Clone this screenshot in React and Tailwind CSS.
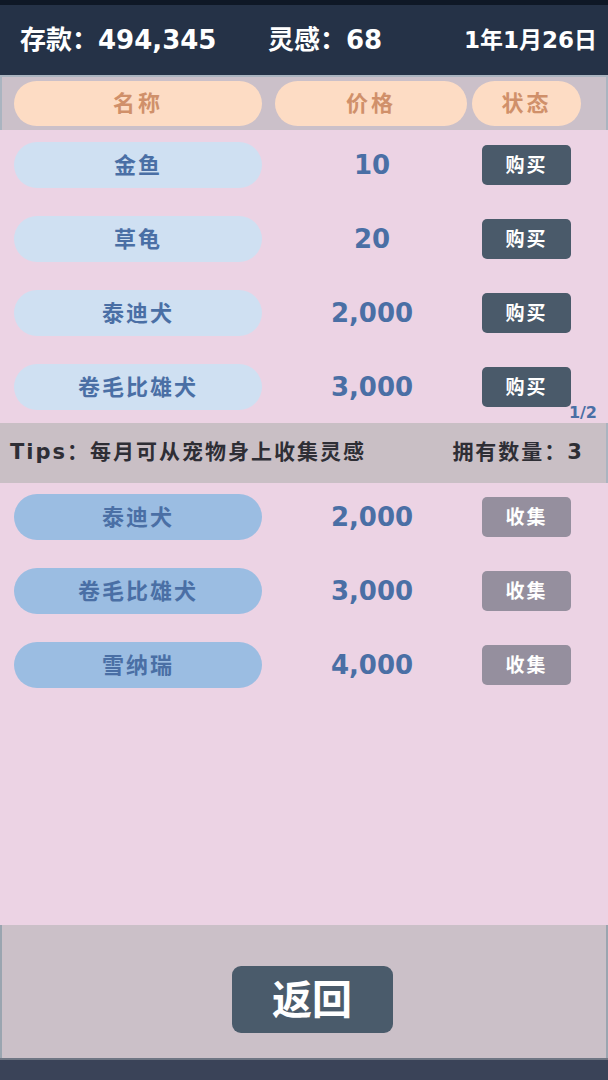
import React from 'react';

const FONT = { fontFamily: '"DejaVu Sans", "Noto Sans CJK SC", sans-serif' };

const shopItems = [
  { name: '金鱼', price: '10' },
  { name: '草龟', price: '20' },
  { name: '泰迪犬', price: '2,000' },
  { name: '卷毛比雄犬', price: '3,000' },
];

const ownedPets = [
  { name: '泰迪犬', price: '2,000' },
  { name: '卷毛比雄犬', price: '3,000' },
  { name: '雪纳瑞', price: '4,000' },
];

// one line of the list: name pill, price, action button
const PetRow = ({ item, pillClass, btnClass, label }) => (
  <div className="flex items-center h-[74px]">
    <div className={`ml-[14px] w-[248px] h-[46px] rounded-full flex items-center justify-center text-[22px] tracking-[2px] font-bold text-[#4a6fa5] ${pillClass}`}>
      {item.name}
    </div>
    <div className="w-[220px] text-center text-[26px] font-bold text-[#4a6fa5]">{item.price}</div>
    <div className={`w-[89px] h-[40px] rounded-[5px] flex items-center justify-center text-[19px] tracking-[2px] font-bold text-white ${btnClass}`}>
      {label}
    </div>
  </div>
);

export default function App() {
  return (
    <div className="w-[608px] h-[1080px] flex flex-col bg-[#ecd3e4] overflow-hidden" style={FONT}>
      <div className="h-[5px] bg-[#0f1826]" />
      {/* top status bar */}
      <div className="h-[70px] bg-[#253247] flex items-center text-white text-[26px] font-bold whitespace-nowrap">
        <div className="ml-[20px] w-[248px]">存款：494,345</div>
        <div className="w-[180px]">灵感：68</div>
        <div className="flex-1 text-right pr-[11px] text-[23px]">1年1月26日</div>
      </div>

      {/* table header */}
      <div className="h-[55px] bg-[#cbc0c9] border-t-2 border-[#aab4c0] border-x-2 flex items-center text-[22px] tracking-[3px] font-bold text-[#d0906a]">
        <div className="ml-[12px] w-[248px] h-[45px] rounded-full bg-[#fddcc4] flex items-center justify-center">名称</div>
        <div className="ml-[13px] w-[192px] h-[45px] rounded-full bg-[#fddcc4] flex items-center justify-center">价格</div>
        <div className="ml-[5px] w-[109px] h-[45px] rounded-full bg-[#fddcc4] flex items-center justify-center">状态</div>
      </div>

      {/* shop list */}
      <div className="h-[293px] relative">
        <div className="-mt-[2px]">
          {shopItems.map((item, i) => (
            <PetRow key={i} item={item} pillClass="bg-[#cfe0f2]" btnClass="bg-[#4a5a6a]" label="购买" />
          ))}
        </div>
        <div className="absolute right-[11px] bottom-[-2px] text-[16px] font-bold text-[#4a6fa5]">1/2</div>
      </div>

      {/* tips bar */}
      <div className="h-[60px] bg-[#c9bfc5] border-r-2 border-[#aab4c0] flex items-center justify-between pl-[10px] pr-[22px] text-[21px] tracking-[2px] font-bold text-[#2e2e35] whitespace-nowrap">
        <div>Tips：每月可从宠物身上收集灵感</div>
        <div>拥有数量：3</div>
      </div>

      {/* owned pets */}
      <div className="flex-1">
        <div className="-mt-[3px]">
          {ownedPets.map((item, i) => (
            <PetRow key={i} item={item} pillClass="bg-[#9bbde2]" btnClass="bg-[#958f9e]" label="收集" />
          ))}
        </div>
      </div>

      {/* footer */}
      <div className="h-[133px] bg-[#cbc0c8] border-x-2 border-[#9aa5b0] flex items-center justify-center pl-[16px] pt-[16px]">
        <button className="w-[161px] h-[67px] rounded-[9px] bg-[#4a5b6b] text-white text-[40px] font-bold">返回</button>
      </div>
      <div className="h-[22px] bg-[#3a4358] border-t-2 border-[#6f7684]" />
    </div>
  );
}
